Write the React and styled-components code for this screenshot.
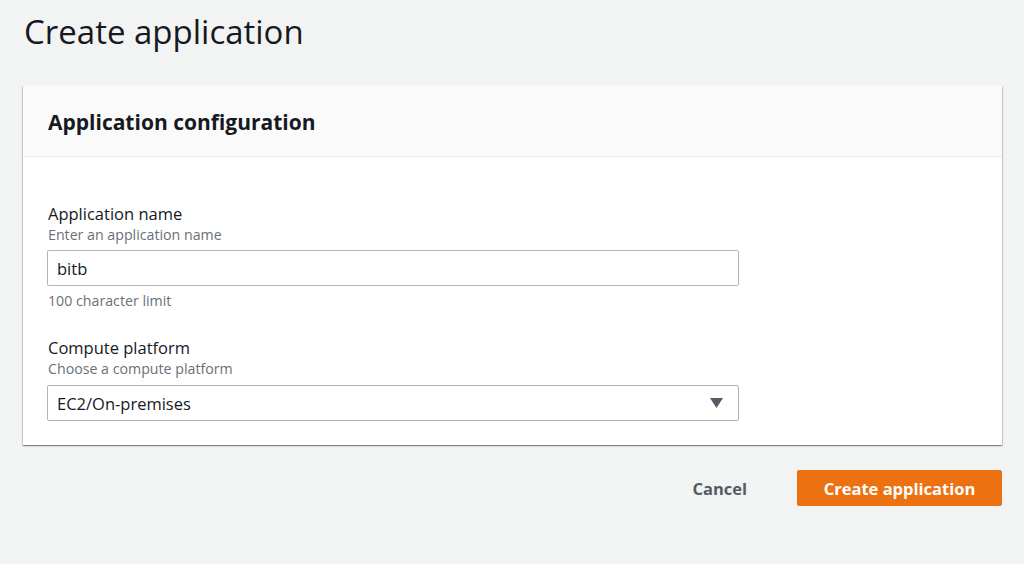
import React from 'react'
import styled, { createGlobalStyle } from 'styled-components'

const GlobalStyle = createGlobalStyle`
  html, body {
    margin: 0;
    padding: 0;
    background: #f2f3f3;
  }
  body {
    font-family: "Open Sans", "Noto Sans", sans-serif;
    color: #16191f;
  }
`

const Page = styled.div`
  padding: 10px 23px 0 23px;
  width: 979px;
`

const Title = styled.h1`
  font-size: 33px;
  font-weight: normal;
  line-height: 44px;
  margin: 0 0 32px 1px;
`

const Card = styled.section`
  background: #fff;
  box-shadow: 0 1px 1px 0 rgba(0, 28, 36, 0.3), 1px 1px 1px 0 rgba(0, 28, 36, 0.15),
    -1px 1px 1px 0 rgba(0, 28, 36, 0.15);
`

const CardHeader = styled.header`
  background: #fafafa;
  border-bottom: 1px solid #eaeded;
  height: 70px;
  display: flex;
  align-items: center;
  padding: 0 25px;
`

const CardTitle = styled.h2`
  margin: 2px 0 0 0;
  font-size: 21px;
  font-weight: bold;
  line-height: 28px;
`

const CardBody = styled.div`
  padding: 46px 24px 24px 24px;
  display: flex;
  flex-direction: column;
  gap: 26px;
`

const Field = styled.div`
  display: flex;
  flex-direction: column;
`

const Label = styled.label`
  font-size: 16.5px;
  line-height: 22px;
  padding-left: 1px;
`

const Description = styled.div`
  font-size: 14.2px;
  line-height: 20px;
  color: #687078;
  padding-left: 1px;
  margin-bottom: ${props => props.gap || 5}px;
`

const Constraint = styled.div`
  font-size: 14.2px;
  line-height: 20px;
  color: #687078;
  margin-top: 5px;
  padding-left: 1px;
`

const TextBox = styled.input`
  box-sizing: border-box;
  width: 692px;
  height: 36px;
  border: 1px solid #aab7b8;
  border-radius: 2px;
  padding: 0 9px;
  font-family: inherit;
  font-size: 16.5px;
  color: #16191f;
  background: #fff;
  outline: none;
`

const SelectBox = styled.div`
  box-sizing: border-box;
  width: 692px;
  height: 36px;
  border: 1px solid #aab7b8;
  border-radius: 2px;
  padding: 0 15px 0 9px;
  display: flex;
  align-items: center;
  justify-content: space-between;
  font-size: 16.5px;
`

const Actions = styled.div`
  display: flex;
  justify-content: flex-end;
  align-items: center;
  gap: 30px;
  margin-top: 25px;
`

const LinkButton = styled.button`
  background: none;
  border: none;
  font-family: inherit;
  font-size: 16.5px;
  font-weight: bold;
  color: #545b64;
  padding: 0 20px;
  height: 35px;
`

const PrimaryButton = styled.button`
  background: #ec7211;
  border: 1px solid #ec7211;
  border-radius: 2px;
  color: #fff;
  font-family: inherit;
  font-size: 16.5px;
  font-weight: bold;
  height: 36px;
  width: 205px;
`

const Caret = () => (
  <svg width="13" height="10" viewBox="0 0 13 10">
    <polygon points="0,0 13,0 6.5,10" fill="#545b64" />
  </svg>
)

export default function App() {
  return (
    <>
      <GlobalStyle />
      <Page>
        <Title>Create application</Title>
        <Card>
          <CardHeader>
            <CardTitle>Application configuration</CardTitle>
          </CardHeader>
          <CardBody>
            <Field>
              <Label>Application name</Label>
              <Description>Enter an application name</Description>
              <TextBox defaultValue="bitb" />
              <Constraint>100 character limit</Constraint>
            </Field>
            <Field>
              <Label>Compute platform</Label>
              <Description gap={6}>Choose a compute platform</Description>
              <SelectBox>
                <span>EC2/On-premises</span>
                <Caret />
              </SelectBox>
            </Field>
          </CardBody>
        </Card>
        <Actions>
          <LinkButton>Cancel</LinkButton>
          <PrimaryButton>Create application</PrimaryButton>
        </Actions>
      </Page>
    </>
  )
}
